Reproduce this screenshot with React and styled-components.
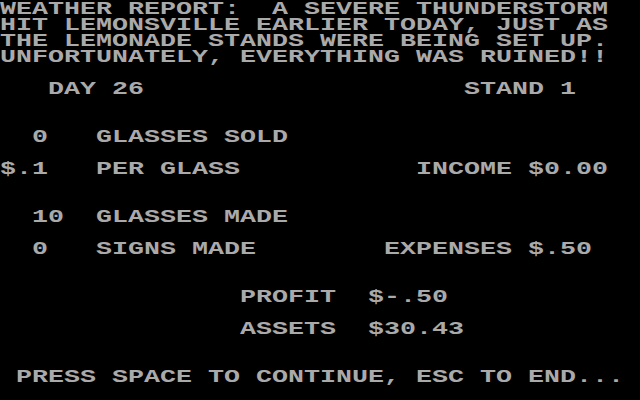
import React from "react";
import styled, { createGlobalStyle } from "styled-components";

const Global = createGlobalStyle`
  html, body { margin: 0; padding: 0; background: #000; }
  #root { width: 640px; height: 400px; }
`;

const Screen = styled.main`
  width: 640px;
  height: 400px;
  background: #000;
  color: #aaaaaa;
  display: flex;
  flex-direction: column;
  overflow: hidden;
  font-family: "Liberation Mono", "DejaVu Sans Mono", monospace;
  font-weight: bold;
`;

const Block = styled.section`
  display: flex;
  flex-direction: column;
`;

const Line = styled.div`
  display: grid;
  grid-template-columns: repeat(40, 16px);
  height: 16px;
  margin-top: ${(p) => (p.$skip || 0) * 16}px;
`;

const Text = styled.span`
  display: block;
  grid-column: ${(p) => p.$col + 1} / span ${(p) => p.$len};
  font-size: 18px;
  line-height: 19px;
  height: 16px;
  white-space: pre;
  transform: scaleX(1.4815);
  transform-origin: left center;
`;

const T = ({ col, children }) => (
  <Text $col={col} $len={Math.min(children.length, 40 - col)}>
    {children}
  </Text>
);

export default function App() {
  return (
    <>
      <Global />
      <Screen>
        <Block>
          <Line><T col={0}>{"WEATHER REPORT:  A SEVERE THUNDERSTORM"}</T></Line>
          <Line><T col={0}>{"HIT LEMONSVILLE EARLIER TODAY, JUST AS"}</T></Line>
          <Line><T col={0}>{"THE LEMONADE STANDS WERE BEING SET UP."}</T></Line>
          <Line><T col={0}>{"UNFORTUNATELY, EVERYTHING WAS RUINED!!"}</T></Line>
        </Block>
        <Line $skip={1}>
          <T col={3}>DAY 26</T>
          <T col={29}>STAND 1</T>
        </Line>
        <Line $skip={2}>
          <T col={2}>0</T>
          <T col={6}>GLASSES SOLD</T>
        </Line>
        <Line $skip={1}>
          <T col={0}>$.1</T>
          <T col={6}>PER GLASS</T>
          <T col={26}>INCOME $0.00</T>
        </Line>
        <Line $skip={2}>
          <T col={2}>10</T>
          <T col={6}>GLASSES MADE</T>
        </Line>
        <Line $skip={1}>
          <T col={2}>0</T>
          <T col={6}>SIGNS MADE</T>
          <T col={24}>EXPENSES $.50</T>
        </Line>
        <Line $skip={2}>
          <T col={15}>{"PROFIT  $-.50"}</T>
        </Line>
        <Line $skip={1}>
          <T col={15}>{"ASSETS  $30.43"}</T>
        </Line>
        <Line $skip={2}>
          <T col={1}>{"PRESS SPACE TO CONTINUE, ESC TO END..."}</T>
        </Line>
      </Screen>
    </>
  );
}
